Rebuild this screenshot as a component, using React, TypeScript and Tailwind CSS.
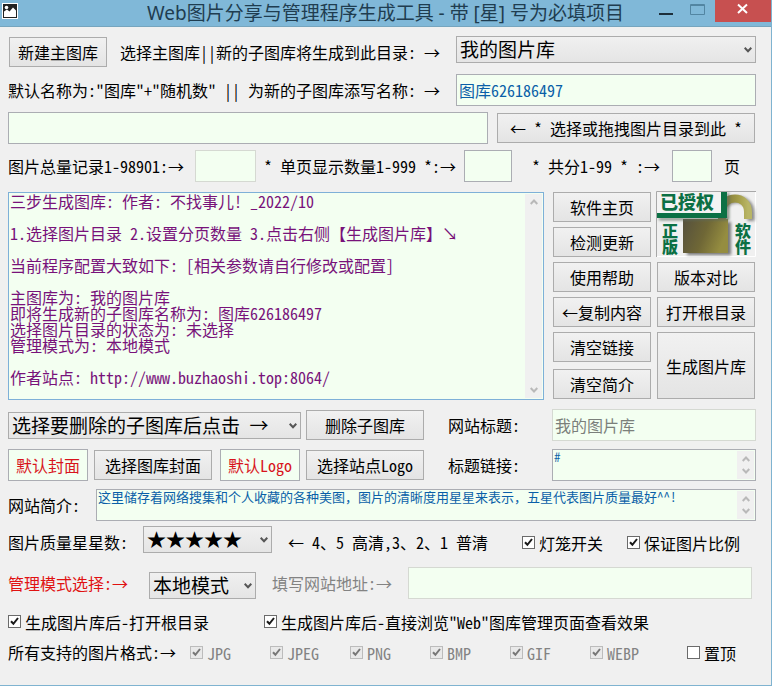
import type { ReactNode } from "react";

const field =
  "h-8 min-w-0 border border-[#abadb3] bg-[#f3fff1] px-0.5 text-[16px] leading-4 outline-none";

function Button({ children, className = "" }: { children: ReactNode; className?: string }) {
  return (
    <button
      type="button"
      className={`shrink-0 whitespace-nowrap border border-[#acacac] bg-linear-to-b from-[#f1f1f1] to-[#e4e4e4] text-[16px] leading-4 text-black ${className}`}
    >
      {children}
    </button>
  );
}

function Select({
  id,
  label,
  value,
  className = "",
}: {
  id?: string;
  label?: string;
  value: string;
  className?: string;
}) {
  return (
    <div className={`relative h-[27px] shrink-0 ${className}`}>
      <select
        id={id}
        aria-label={label}
        className="block h-full w-full appearance-none border border-[#acacac] bg-linear-to-b from-[#f0f0f0] to-[#e5e5e5] pb-0.5 pl-[3px] text-[19px] leading-6 text-black outline-none"
      >
        <option>{value}</option>
      </select>
      <svg
        className="pointer-events-none absolute top-[11px] right-1 h-[6px] w-2"
        viewBox="0 0 8 6"
        fill="none"
        stroke="#565656"
        strokeWidth="2"
        aria-hidden="true"
      >
        <path d="M0.7 0.8 4 4.3 7.3 0.8" />
      </svg>
    </div>
  );
}

function Chevron({ up = false }: { up?: boolean }) {
  return (
    <svg className="h-[6px] w-2" viewBox="0 0 8 6" fill="none" stroke="#b9b9b9" strokeWidth="2" aria-hidden="true">
      <path d={up ? "M0.7 5 4 1.5 7.3 5" : "M0.7 1 4 4.5 7.3 1"} />
    </svg>
  );
}

function TextBox({
  id,
  label,
  value,
  className,
  textClass,
}: {
  id?: string;
  label?: string;
  value: string;
  className: string;
  textClass: string;
}) {
  return (
    <div className={`flex min-w-0 border bg-[#f3fff1] pr-px ${className}`}>
      <textarea
        id={id}
        aria-label={label}
        defaultValue={value}
        className={`block h-full min-w-0 flex-1 resize-none overflow-hidden bg-transparent pl-px outline-none ${textClass}`}
      />
      <div className="my-px flex w-[17px] shrink-0 flex-col items-center justify-between bg-[#f0f0f0] py-[5px]">
        <Chevron up />
        <Chevron />
      </div>
    </div>
  );
}

function Check({
  children,
  checked = false,
  disabled = false,
  className = "",
}: {
  children: ReactNode;
  checked?: boolean;
  disabled?: boolean;
  className?: string;
}) {
  return (
    <label
      className={`flex shrink-0 items-center gap-1 whitespace-nowrap ${disabled ? "text-[#838383]" : "text-black"} ${className}`}
    >
      <span className="relative block size-[13px]">
        <input
          type="checkbox"
          defaultChecked={checked}
          disabled={disabled}
          className="peer block size-[13px] appearance-none border border-[#6b6b6b] bg-white disabled:border-[#bcbcbc] disabled:bg-[#e9e9e9]"
        />
        <svg
          className="pointer-events-none absolute inset-0 hidden size-[13px] peer-checked:block"
          viewBox="0 0 13 13"
          fill="none"
          stroke={disabled ? "#777777" : "#1a1a1a"}
          strokeWidth="2"
          aria-hidden="true"
        >
          <path d="M3 6.2 5.4 8.8 10 3" />
        </svg>
      </span>
      <span className="pt-0.5">{children}</span>
    </label>
  );
}

function LicenseBadge() {
  return (
    <svg className="block h-[66px] w-[100px] overflow-visible" viewBox="0 0 100 66" role="img" aria-label="已授权 正版软件">
      <defs>
        <linearGradient id="body" x1="0" y1="0" x2="1" y2="0.3">
          <stop offset="0" stopColor="#55503d" />
          <stop offset="0.55" stopColor="#6f6736" />
          <stop offset="1" stopColor="#958d40" />
        </linearGradient>
        <linearGradient id="ring" x1="0" y1="0" x2="1" y2="0">
          <stop offset="0" stopColor="#77703a" />
          <stop offset="0.6" stopColor="#a19a45" />
          <stop offset="1" stopColor="#b8b566" />
        </linearGradient>
        <filter id="soft" x="-20%" y="-20%" width="140%" height="140%">
          <feGaussianBlur stdDeviation="1.6" />
        </filter>
      </defs>
      <rect width="100" height="66" fill="#f0f0f0" />
      <path d="M0.5 66V0.5H100" fill="none" stroke="#a8a8a8" />
      <path d="M99.5 1V65.5H1" fill="none" stroke="#ffffff" />
      <g filter="url(#soft)" fill="none" stroke="#8a8a8a">
        <rect x="31" y="31" width="44" height="33" fill="#777777" stroke="none" />
        <path d="M67 29V22C67 4 95 4 95 22V30" strokeWidth="7" />
      </g>
      <path d="M66 30V21C66 3 92 3 92 21V28" fill="none" stroke="url(#ring)" strokeWidth="8" />
      <rect x="27" y="28" width="45" height="34" fill="url(#body)" />
      <path d="M3 28H72V2" fill="none" stroke="#5b6b5b" strokeWidth="2" filter="url(#soft)" />
      <path d="M1 1H65V22H1Z" fill="#f3f3f3" />
      <path d="M65 1H71V27H1V22H65Z" fill="#0b7044" />
      <g fill="#0b7044" fontFamily="'Noto Sans CJK SC', sans-serif" fontWeight="900">
        <text x="4" y="18" fontSize="18">已授权</text>
        <text x="14" y="32" fontSize="16" writingMode="vertical-rl">正版</text>
        <text x="87" y="32" fontSize="16" writingMode="vertical-rl">软件</text>
      </g>
    </svg>
  );
}

const log = `三步生成图库: 作者: 不找事儿! _2022/10

1.选择图片目录 2.设置分页数量 3.点击右侧【生成图片库】↘

当前程序配置大致如下: [相关参数请自行修改或配置]

主图库为: 我的图片库
即将生成新的子图库名称为: 图库626186497
选择图片目录的状态为: 未选择
管理模式为: 本地模式

作者站点: http://www.buzhaoshi.top:8064/`;

export default function App() {
  return (
    <div className="flex min-h-screen flex-col border-r border-b border-[#7fb3d0] bg-[#f0f0f0] font-['Noto_Sans_Mono_CJK_SC','Noto_Sans_CJK_SC',monospace] text-[16px] leading-4 whitespace-pre text-black">
      <header className="relative flex h-[27px] items-center justify-center border-b border-[#76a5be] bg-[#80b8d8]">
        <svg className="absolute top-[3px] left-0.5 size-4" viewBox="0 0 16 16" aria-hidden="true">
          <rect x="0.5" y="0.5" width="15" height="15" fill="#222222" stroke="#ffffff" />
          <circle cx="4.5" cy="4.5" r="1.8" fill="#ffffff" />
          <path d="M2 14V8.500L5 6.500 7.500 8.500 11 4.500 14 7.500V14Z" fill="#ffffff" />
        </svg>
        <h1 className="font-['Noto_Sans','Noto_Sans_CJK_SC',sans-serif] text-[19px] leading-6 text-[#1f3d50]">
          Web图片分享与管理程序生成工具 - 带 [星] 号为必填项目
        </h1>
        <div className="absolute top-0 right-0 flex h-[22px]">
          <button type="button" aria-label="最小化" className="w-8">
            <svg className="size-full" viewBox="0 0 32 22" aria-hidden="true">
              <path d="M4 14H18" stroke="#1d2f3b" strokeWidth="2" />
            </svg>
          </button>
          <button type="button" aria-label="最大化" className="w-7">
            <svg className="size-full" viewBox="0 0 28 22" fill="none" stroke="#5285a2" aria-hidden="true">
              <path d="M3.500 4.500H17.500V14.500H3.500ZM3.500 5.500H17.500" />
            </svg>
          </button>
          <button type="button" aria-label="关闭" className="w-14 bg-[#c75050]">
            <svg className="size-full" viewBox="0 0 56 22" aria-hidden="true">
              <path d="M23 4.500 32 13M32 4.500 23 13" stroke="#ffffff" strokeWidth="2" />
            </svg>
          </button>
        </div>
      </header>

      <main className="flex flex-col pt-[9px] pr-[15px] pl-2">
        <section className="flex flex-col gap-1.5">
          <div className="flex h-8 items-center">
            <Button className="ml-px h-[30px] w-[98px]">新建主图库</Button>
            <label htmlFor="main" className="flex-1 pl-[13px]">
              选择主图库||新的子图库将生成到此目录: →
            </label>
            <Select id="main" value="我的图片库" className="w-[300px] self-start" />
          </div>
          <div className="flex h-8 items-center">
            <label htmlFor="name" className="flex-1">
              默认名称为:"图库"+"随机数" || 为新的子图库添写名称: →
            </label>
            <div className="flex w-[300px] self-start">
              <input id="name" defaultValue="图库626186497" className={`${field} h-7 flex-1 text-[#0a5fa8]`} />
            </div>
          </div>
          <div className="flex h-8 items-center gap-[9px]">
            <input aria-label="图片目录" className={`${field} flex-1`} />
            <Button className="mr-px h-[30px] w-[258px]">← * 选择或拖拽图片目录到此 *</Button>
          </div>
          <div className="flex h-8 items-center">
            <label htmlFor="total">图片总量记录1-98901:→</label>
            <input id="total" disabled className={`${field} ml-[11px] w-[61px] border-[#d5d9d2]`} />
            <label htmlFor="per" className="ml-2">
              * 单页显示数量1-999 *:→
            </label>
            <input id="per" className={`${field} ml-2 w-12`} />
            <label htmlFor="pages" className="ml-auto">
              * 共分1-99 * :→
            </label>
            <input id="pages" className={`${field} ml-3 w-10`} />
            <span className="mr-4 ml-3">页</span>
          </div>
        </section>

        <section className="mt-[9px] flex h-[209px] gap-[9px]">
          <TextBox
            label="运行信息"
            value={log}
            className="mt-px flex-1 border-[#7eb0d8]"
            textClass="text-[16px] leading-4 text-[#78127a]"
          />
          <div className="flex gap-[5px]">
            <div className="flex w-[98px] flex-col gap-[5px] pt-px">
              <Button className="h-[30px]">软件主页</Button>
              <Button className="h-[30px]">检测更新</Button>
              <Button className="h-[30px]">使用帮助</Button>
              <Button className="h-[30px]">←复制内容</Button>
              <Button className="h-[30px]">清空链接</Button>
              <Button className="mt-0.5 h-[30px]">清空简介</Button>
            </div>
            <div className="flex w-[100px] flex-col gap-[5px]">
              <LicenseBadge />
              <Button className="mx-px h-[30px]">版本对比</Button>
              <Button className="mx-px h-[30px]">打开根目录</Button>
              <Button className="mx-px h-[67px]">生成图片库</Button>
            </div>
          </div>
        </section>

        <section className="mt-[9px] flex flex-col gap-2">
          <div className="flex h-8 items-center">
            <Select label="要删除的子图库" value="选择要删除的子图库后点击 →" className="w-[293px]" />
            <Button className="ml-[5px] h-[30px] w-[118px]">删除子图库</Button>
            <label htmlFor="title" className="ml-6 w-[104px]">
              网站标题:
            </label>
            <input
              id="title"
              disabled
              defaultValue="我的图片库"
              className={`${field} flex-1 border-[#d5d9d2] text-[#7b7f7b]`}
            />
          </div>
          <div className="flex h-8 items-center">
            <input aria-label="封面" readOnly value="默认封面" className={`${field} w-20 text-center text-[#d8141c]`} />
            <Button className="ml-1.5 h-[30px] w-[118px]">选择图库封面</Button>
            <input aria-label="Logo" readOnly value="默认Logo" className={`${field} ml-2 w-20 text-center text-[#d8141c]`} />
            <Button className="ml-1.5 h-[30px] w-[118px]">选择站点Logo</Button>
            <label htmlFor="link" className="ml-6 w-[104px]">
              标题链接:
            </label>
            <TextBox
              id="link"
              value="#"
              className="h-8 flex-1 border-[#abadb3]"
              textClass="text-[13px] leading-[14px] text-[#0a5fa8]"
            />
          </div>
          <div className="flex h-8 items-center">
            <label htmlFor="intro" className="w-[88px]">
              网站简介:
            </label>
            <TextBox
              id="intro"
              value="这里储存着网络搜集和个人收藏的各种美图，图片的清晰度用星星来表示，五星代表图片质量最好^^!"
              className="h-8 flex-1 border-[#abadb3]"
              textClass="text-[13px] leading-[14px] text-[#0a5fa8]"
            />
          </div>
        </section>

        <section className="mt-[5px] flex flex-col">
          <div className="flex h-8 items-center">
            <label htmlFor="stars" className="w-[135px]">
              图片质量星星数:
            </label>
            <Select id="stars" value="★★★★★" className="w-[129px] self-start" />
            <span className="ml-4">← 4、5 高清,3、2、1 普清</span>
            <Check checked className="ml-auto">
              灯笼开关
            </Check>
            <Check checked className="mr-4 ml-6">
              保证图片比例
            </Check>
          </div>
          <div className="mt-[9px] flex h-8 items-center">
            <label htmlFor="mode" className="w-[141px] text-[#e01212]">
              管理模式选择:→
            </label>
            <Select id="mode" value="本地模式" className="w-[107px] self-end" />
            <label htmlFor="url" className="ml-4 text-[#838383]">
              填写网站地址:→
            </label>
            <input id="url" disabled className={`${field} mr-1 ml-4 flex-1 border-[#d5d9d2]`} />
          </div>
          <div className="mt-2 flex h-7 items-center">
            <Check checked className="w-64">
              生成图片库后-打开根目录
            </Check>
            <Check checked>生成图片库后-直接浏览"Web"图库管理页面查看效果</Check>
          </div>
          <div className="mt-[3px] flex h-7 items-center">
            <span className="w-[182px]">所有支持的图片格式:→</span>
            {["JPG", "JPEG", "PNG", "BMP", "GIF", "WEBP"].map((format) => (
              <Check key={format} checked disabled className="w-20">
                {format}
              </Check>
            ))}
            <Check className="mr-5 ml-auto">置顶</Check>
          </div>
        </section>
      </main>
    </div>
  );
}
